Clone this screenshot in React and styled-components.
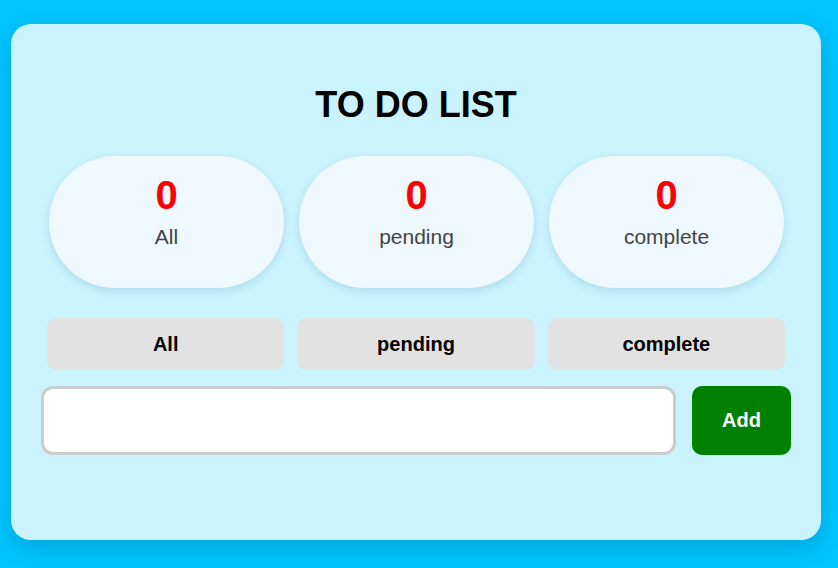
import React, { useState } from "react";
import styled, { createGlobalStyle } from "styled-components";

const Global = createGlobalStyle`
  html, body { margin: 0; padding: 0; }
  body {
    background: #00c6ff;
    font-family: "Liberation Sans", Arial, sans-serif;
    min-height: 568px;
  }
`;

const Page = styled.div`
  padding: 24px 17px 28px 11px;
`;

const Card = styled.div`
  width: 810px;
  height: 516px;
  box-sizing: border-box;
  background: #caf3fe;
  border-radius: 20px;
  box-shadow: 0 8px 24px rgba(0, 60, 110, 0.25);
  padding: 61px 30px 0;
  display: flex;
  flex-direction: column;
`;

const Title = styled.h1`
  margin: 0;
  font-size: 36px;
  line-height: 40px;
  text-align: center;
  color: #000;
  font-weight: 700;
`;

const Stats = styled.div`
  display: grid;
  grid-template-columns: repeat(3, 235px);
  gap: 15px;
  margin: 31px 7px 0 8px;
`;

const Stat = styled.div`
  height: 132px;
  border-radius: 66px;
  background: #eef8fe;
  box-shadow: 0 3px 8px rgba(0, 90, 130, 0.15);
  display: flex;
  flex-direction: column;
  align-items: center;
  padding-top: 17px;
  box-sizing: border-box;
`;

const Count = styled.div`
  color: #ff0000;
  font-size: 40px;
  font-weight: 700;
  line-height: 44px;
`;

const Label = styled.div`
  color: #444;
  font-size: 21px;
  line-height: 24px;
  margin-top: 8px;
`;

const Filters = styled.div`
  display: grid;
  grid-template-columns: repeat(3, 1fr);
  gap: 13px;
  margin: 30px 6px 0 6px;
`;

const FilterButton = styled.button`
  height: 52px;
  border: none;
  border-radius: 10px;
  background: #e2e2e2;
  font-family: "Liberation Sans", Arial, sans-serif;
  font-size: 20px;
  font-weight: 700;
  color: #000;
  cursor: pointer;
`;

const InputRow = styled.div`
  display: flex;
  gap: 16px;
  margin-top: 16px;
`;

const TaskInput = styled.input`
  flex: 1;
  height: 69px;
  box-sizing: border-box;
  border: 3px solid #cccccc;
  border-radius: 12px;
  background: #fff;
  font-size: 20px;
  padding: 0 12px;
  outline: none;
`;

const AddButton = styled.button`
  width: 99px;
  height: 69px;
  border: none;
  border-radius: 10px;
  background: #008000;
  color: #fff;
  font-family: "Liberation Sans", Arial, sans-serif;
  font-size: 20px;
  font-weight: 700;
  cursor: pointer;
`;

export default function App() {
  const [text, setText] = useState("");
  const labels = ["All", "pending", "complete"];
  return (
    <Page>
      <Global />
      <Card>
        <Title>TO DO LIST</Title>
        <Stats>
          {labels.map((l) => (
            <Stat key={l}>
              <Count>0</Count>
              <Label>{l}</Label>
            </Stat>
          ))}
        </Stats>
        <Filters>
          {labels.map((l) => (
            <FilterButton key={l}>{l}</FilterButton>
          ))}
        </Filters>
        <InputRow>
          <TaskInput value={text} onChange={(e) => setText(e.target.value)} />
          <AddButton>Add</AddButton>
        </InputRow>
      </Card>
    </Page>
  );
}
